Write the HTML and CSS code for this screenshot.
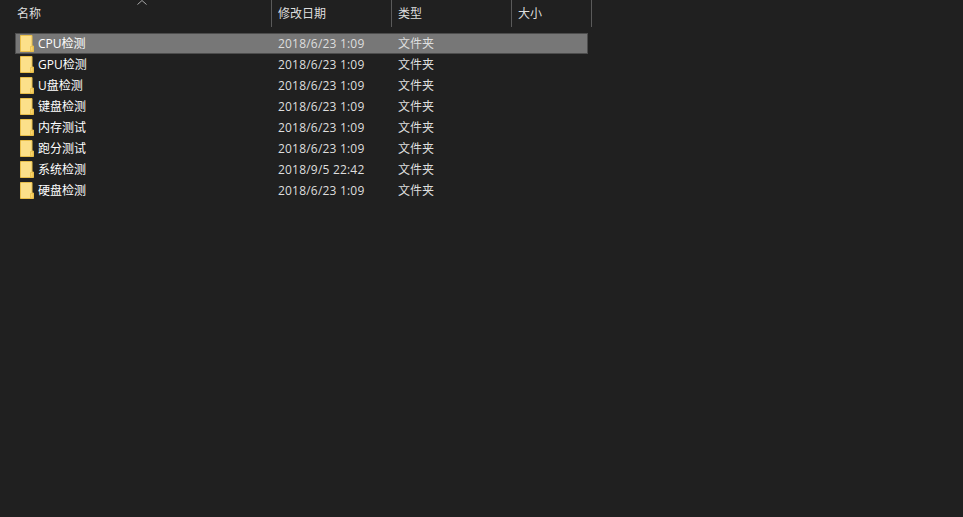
FILE: index.html
```html
<!DOCTYPE html>
<html lang="zh">
<head>
<meta charset="utf-8">
<title>文件夹</title>
<link rel="stylesheet" href="styles.css">
</head>
<body>
<svg class="defs" width="0" height="0" aria-hidden="true">
  <symbol id="folder" viewBox="0 0 14 17">
    <path d="M.5.5h11.5v10.5h1.5v5.500H.5z" fill="#fce08a" stroke="#e9bf4a"/>
    <path d="M10.500 11.500h2.500v4.500h-2.500z" fill="#fbd56e" stroke="#e9bf4a" stroke-width=".8"/>
  </symbol>
</svg>
<div class="header">
  <div class="col col-name">名称<span class="sort"><svg width="10" height="5" viewBox="0 0 10 5"><path d="M.5 4.500 5 .5l4.500 4" fill="none" stroke="#a8a8a8"/></svg></span></div>
  <div class="col col-date">修改日期</div>
  <div class="col col-type">类型</div>
  <div class="col col-size">大小</div>
</div>
<div class="list">
  <div class="row selected"><svg class="icon"><use href="#folder"/></svg><span class="name">CPU检测</span><span class="date">2018/6/23 1:09</span><span class="type">文件夹</span></div>
  <div class="row"><svg class="icon"><use href="#folder"/></svg><span class="name">GPU检测</span><span class="date">2018/6/23 1:09</span><span class="type">文件夹</span></div>
  <div class="row"><svg class="icon"><use href="#folder"/></svg><span class="name">U盘检测</span><span class="date">2018/6/23 1:09</span><span class="type">文件夹</span></div>
  <div class="row"><svg class="icon"><use href="#folder"/></svg><span class="name">键盘检测</span><span class="date">2018/6/23 1:09</span><span class="type">文件夹</span></div>
  <div class="row"><svg class="icon"><use href="#folder"/></svg><span class="name">内存测试</span><span class="date">2018/6/23 1:09</span><span class="type">文件夹</span></div>
  <div class="row"><svg class="icon"><use href="#folder"/></svg><span class="name">跑分测试</span><span class="date">2018/6/23 1:09</span><span class="type">文件夹</span></div>
  <div class="row"><svg class="icon"><use href="#folder"/></svg><span class="name">系统检测</span><span class="date">2018/9/5 22:42</span><span class="type">文件夹</span></div>
  <div class="row"><svg class="icon"><use href="#folder"/></svg><span class="name">硬盘检测</span><span class="date">2018/6/23 1:09</span><span class="type">文件夹</span></div>
</div>
</body>
</html>
```
FILE: styles.css
```css
* { box-sizing: border-box; }
html, body { margin: 0; height: 100%; }
body {
  background: #202020;
  color: #fff;
  font: 12px/16px "Open Sans", "Liberation Sans", "Noto Sans CJK SC", sans-serif;
  overflow: hidden;
}
.defs { position: absolute; }
.header { display: flex; height: 27px; }
.col {
  height: 27px;
  padding: 6px 0 0 6px;
  border-right: 1px solid #5a5a5a;
  color: #dedede;
}
.col-name { position: relative; width: 272px; padding-left: 17px; }
.col-date, .col-type { width: 120px; }
.col-size { width: 80px; }
.sort { position: absolute; left: 137px; top: 0; line-height: 0; }
.list { margin-top: 6px; padding-left: 15px; }
.row {
  display: flex;
  align-items: center;
  width: 573px;
  height: 21px;
  border: 1px solid transparent;
}
.row.selected { background: #777; border-color: #4d4d4d; }
.icon { width: 14px; height: 17px; margin-left: 4px; flex: none; }
.name { width: 240px; margin-left: 4px; flex: none; }
.date { width: 120px; flex: none; color: #dedede; letter-spacing: .2px; }
.type { flex: 1; color: #dedede; }
```
